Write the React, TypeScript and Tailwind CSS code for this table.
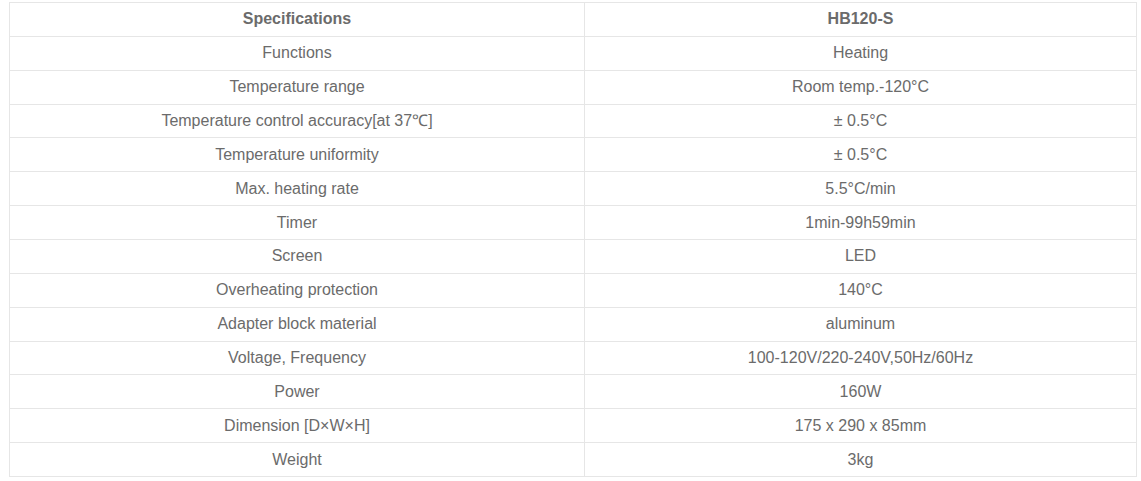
const rows: [string, string][] = [
  ['Functions', 'Heating'],
  ['Temperature range', 'Room temp.-120°C'],
  ['Temperature control accuracy[at 37℃]', '± 0.5°C'],
  ['Temperature uniformity', '± 0.5°C'],
  ['Max. heating rate', '5.5°C/min'],
  ['Timer', '1min-99h59min'],
  ['Screen', 'LED'],
  ['Overheating protection', '140°C'],
  ['Adapter block material', 'aluminum'],
  ['Voltage, Frequency', '100-120V/220-240V,50Hz/60Hz'],
  ['Power', '160W'],
  ['Dimension [D×W×H]', '175 x 290 x 85mm'],
  ['Weight', '3kg'],
];

const cell = 'h-[33.86px] border border-[#e6e6e6] p-0 text-center align-middle';

export default function App() {
  return (
    <div className="bg-white pt-[2px] pl-[9px] font-['Liberation_Sans',Arial,sans-serif] text-[16px] text-[#6b6b6b]">
      <table className="w-[1128px] border-collapse table-fixed">
        <colgroup>
          <col className="w-[575px]" />
          <col />
        </colgroup>
        <thead>
          <tr>
            <th className={`${cell} font-bold`}>Specifications</th>
            <th className={`${cell} font-bold`}>HB120-S</th>
          </tr>
        </thead>
        <tbody>
          {rows.map(([k, v]) => (
            <tr key={k}>
              <td className={cell}>{k}</td>
              <td className={cell}>{v}</td>
            </tr>
          ))}
        </tbody>
      </table>
    </div>
  );
}
